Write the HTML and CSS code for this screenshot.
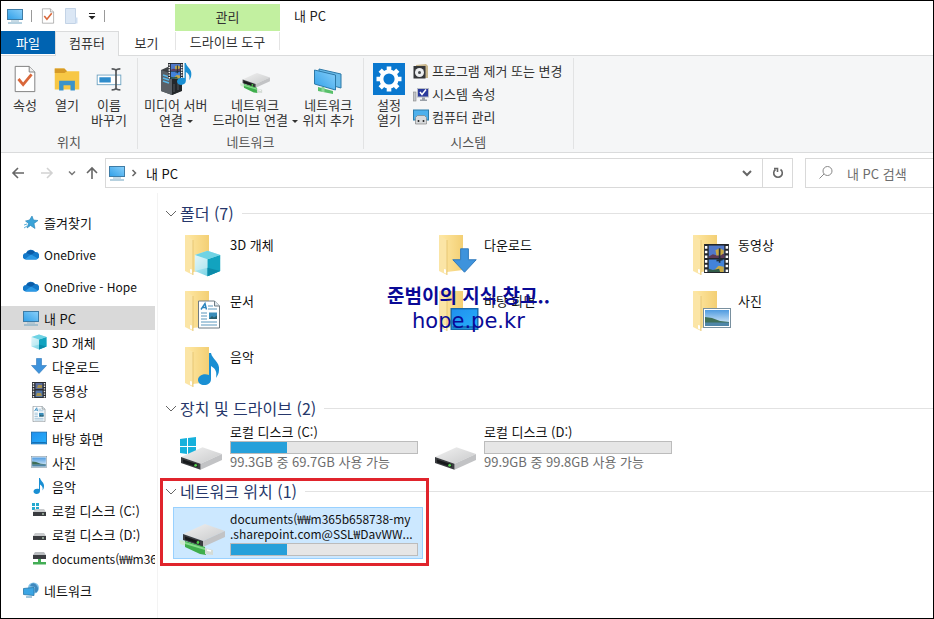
FILE: index.html
```html
<!DOCTYPE html>
<html lang="ko">
<head>
  <meta charset="UTF-8">
  <title>내 PC</title>
  <link rel="stylesheet" href="styles.css">
</head>
<body>

  <svg class="sprite" aria-hidden="true">
    <defs>
      <linearGradient id="g-screen" x1="0" y1="1" x2="1" y2="0">
        <stop offset="0" stop-color="#2f9fe8"/><stop offset="1" stop-color="#8ad0fa"/>
      </linearGradient>
      <linearGradient id="g-fold" x1="0" y1="0" x2="1" y2="0">
        <stop offset="0" stop-color="#ffe9a6"/><stop offset="1" stop-color="#f3cf74"/>
      </linearGradient>
      <linearGradient id="g-cube" x1="0" y1="0" x2="1" y2="1">
        <stop offset="0" stop-color="#d9f5fa"/><stop offset="1" stop-color="#5cc9de"/>
      </linearGradient>
      <linearGradient id="g-drive" x1="0" y1="0" x2="1" y2="1">
        <stop offset="0" stop-color="#f1f1f1"/><stop offset="1" stop-color="#c9cacb"/>
      </linearGradient>
      <linearGradient id="g-sky" x1="0" y1="0" x2="0" y2="1">
        <stop offset="0" stop-color="#4f9be0"/><stop offset="1" stop-color="#e8f4fb"/>
      </linearGradient>
      <linearGradient id="g-desk" x1="0" y1="0" x2="1" y2="1">
        <stop offset="0" stop-color="#1f8fee"/><stop offset="1" stop-color="#27b0fb"/>
      </linearGradient>
    </defs>

    <symbol id="monitor" viewBox="0 0 16 16">
      <rect x=".5" y="1.500" width="15" height="10" fill="url(#g-screen)" stroke="#3e7ca6"/>
      <path d="M4 13h8" stroke="#8fb6cc"/><path d="M1 15h14" stroke="#6fa3c0"/>
    </symbol>
    <symbol id="check" viewBox="0 0 24 30">
      <path d="M1.500 1.500h15l6 6v21h-21z" fill="#fff" stroke="#7b7b7b"/>
      <path d="M16.500 1.500v6h6" fill="#eee" stroke="#7b7b7b"/>
      <path d="M5 15l5 6 9-11" fill="none" stroke="#d9673a" stroke-width="3"/>
    </symbol>
    <symbol id="cube" viewBox="0 0 16 16">
      <path d="M8 .5l7.500 2.500v9.500L8 15.500.5 12.500V3z" fill="url(#g-cube)"/>
      <path d="M8 5.500L15.500 3v9.500L8 15.500z" fill="#12a3bf"/>
      <path d="M.5 3L8 .5 15.500 3 8 5.500z" fill="#6fd3e4"/>
      <path d="M8 15.500v-5l7.500 2z" fill="#0c8ba9"/>
      <path d="M8 5.500v5L.5 12.500V3z" fill="#fff" opacity=".35"/>
    </symbol>
    <symbol id="down" viewBox="0 0 16 16">
      <path d="M5.500.5h5v7h5L8 15.500.5 7.500h5z" fill="#3e93dc" stroke="#2d77bb" stroke-width=".6"/>
    </symbol>
    <symbol id="film" viewBox="0 0 24 28">
      <rect width="24" height="28" fill="#23262b"/>
      <path d="M2 2v25M22 2v25" stroke="#fff" stroke-width="2.400" stroke-dasharray="2.500 2"/>
      <rect x="4.500" y="1.500" width="15" height="12" fill="#5179c9"/>
      <rect x="4.500" y="15" width="15" height="12" fill="#4383d9"/>
      <path d="M4.500 12l4-2 4 1 3-3 4 2v3.500h-15z" fill="#5d3a56"/>
      <path d="M11 6l4-2 4 2v3l-3 2h-4z" fill="#c9a943"/>
      <path d="M15 4v14M12 16l6-1" stroke="#20303a" stroke-width="1.600"/>
      <path d="M10 25l4-4 5 1v5h-8z" fill="#c9ab47"/>
      <path d="M4.500 24l4 1 6-1 1 3h-11z" fill="#315c49"/>
    </symbol>
    <symbol id="film-s" viewBox="0 0 16 16">
      <rect x="1" width="14" height="16" fill="#2b2e33"/>
      <path d="M2.500 1v15M13.500 1v15" stroke="#e8e8e8" stroke-width="1.400" stroke-dasharray="1.400 1.200"/>
      <rect x="4.500" y="1" width="7" height="6" fill="#5b6d9c"/>
      <rect x="4.500" y="8.500" width="7" height="6.500" fill="#5577a8"/>
      <path d="M7 3h4v3H6zM6 11h4l1 3H5z" fill="#a6934f"/>
    </symbol>
    <symbol id="doc" viewBox="0 0 22 28">
      <path d="M.5.500h16l5 5v22H.5z" fill="#fff" stroke="#6f7b83"/>
      <path d="M16.500.500v5h5" fill="#dfe7ec" stroke="#6f7b83"/>
      <path d="M3 9L7 3l1.500 6M4.500 7H8" fill="none" stroke="#2a84bd" stroke-width="1.400"/>
      <path d="M10 5.500h5M10 8.500h9M3 12.500h6M3 15.500h6M3 18.500h6M3 21.500h16M3 24.500h16" stroke="#5b97bd"/>
      <rect x="11" y="12" width="8" height="6.500" fill="#3b8db9"/>
      <path d="M11 18.500l3-3 2 1.500 3-2v3.500z" fill="#2b5f6e"/>
    </symbol>
    <symbol id="desk" viewBox="0 0 28 22">
      <rect x=".7" y=".7" width="26.600" height="20.600" fill="url(#g-desk)" stroke="#1469ab" stroke-width="1.400"/>
      <path d="M2 19h24" stroke="#0f5e9f" stroke-width="1.400"/>
    </symbol>
    <symbol id="photo" viewBox="0 0 28 20">
      <rect x=".5" y=".5" width="27" height="19" fill="#fff" stroke="#79909f"/>
      <rect x="2" y="2" width="24" height="16" fill="url(#g-sky)"/>
      <path d="M2 9l7 1 8 3 9 1v1H2z" fill="#3f6f57"/>
      <path d="M2 14.500h24V18H2z" fill="#4f86a8"/>
    </symbol>
    <symbol id="note" viewBox="0 0 22 32">
      <path d="M11 0h2c1 6 9 9 8 17 0 4-2 6-3 8 1-6 0-9-5-12v13c0 4-3 6-7 6-3 0-6-2-6-5 0-4 5-7 11-5z" fill="#1a8fd3"/>
    </symbol>
    <symbol id="folder" viewBox="0 0 48 48">
      <path d="M12 4h19v34H12z" fill="#f7dc8f"/>
      <path d="M7 4h24v35l-16 2z" fill="url(#g-fold)"/>
      <path d="M7 4l8 5v35l-8-4z" fill="#fbe5a6"/>
      <path d="M15 9v35" stroke="#e3c069" stroke-width=".8"/>
      <path d="M12 38l2 .500v4l-2-1z" fill="#fff"/>
    </symbol>
    <symbol id="drive" viewBox="0 0 44 26">
      <path d="M1 12L23 2l20 7-22 10z" fill="url(#g-drive)"/>
      <path d="M21 19l22-10v6L21 25z" fill="#c2c3c5"/>
      <path d="M1 12l20 7v6L1 18z" fill="#3b3d40"/>
      <path d="M3 14.500l15 5v3L3 17.500z" fill="#17191b"/>
      <circle cx="16" cy="20.500" r="1.400" fill="#51d04c"/>
    </symbol>
    <symbol id="netdrive" viewBox="0 0 48 40">
      <use href="#drive" x="4" y="4" width="44" height="26"/>
      <path d="M1 22l6 1 1 5-6-2z" fill="#cfe9d2"/>
      <path d="M7 23l20 6 1 8-6-1L7 29z" fill="#3fae4c"/>
      <path d="M7 24l20 6v2L7 26z" fill="#86dc8b"/>
      <path d="M27 30l8 2v5l-8-1z" fill="#d5dcd6"/>
      <path d="M29 32l4 1" stroke="#fff" stroke-width="1.500"/>
    </symbol>
    <symbol id="windrive" viewBox="0 0 48 48">
      <path d="M2 13l7-1v8H2zM10 12l8-1v9h-8zM2 21h7v7l-7-1zM10 21h8v8l-8-1z" fill="#16b1dc"/>
      <use href="#drive" x="2" y="19" width="43" height="26"/>
    </symbol>
    <symbol id="plaindrive" viewBox="0 0 48 48">
      <use href="#drive" x="2" y="19" width="43" height="26"/>
    </symbol>
    <symbol id="drive-s" viewBox="0 0 16 16">
      <path d="M4 7h9l2 3H2z" fill="#c9cbcd"/><rect x="2" y="10" width="13" height="4" fill="#3a3c40"/>
      <rect x="11" y="11.500" width="2" height="1" fill="#d8f5d8"/>
    </symbol>
    <symbol id="windrive-s" viewBox="0 0 16 16">
      <path d="M1 1h3v3H1zM5 1h3v3H5zM1 5h3v3H1zM5 5h3v3H5z" fill="#25a9cf"/>
      <use href="#drive-s" width="16" height="16"/>
    </symbol>
    <symbol id="netdrive-s" viewBox="0 0 16 16">
      <path d="M4 2h9l2 3H2z" fill="#b9bcbf"/><rect x="2" y="5" width="13" height="4" fill="#3a3c40"/>
      <path d="M7 9h3v3h5v2.500H2V12h5z" fill="#43ad55"/>
    </symbol>
    <symbol id="star" viewBox="0 0 16 16">
      <path d="M9 2l1.500 4 4.500.500-4 3 1 5-4.500-3L4 14l1.500-4.500L2.500 7l4-1z" fill="#3aa3d8" stroke="#2782b5" stroke-width=".6"/>
      <path d="M1 11l3-1M1 14l3-2" stroke="#5fb2da"/>
    </symbol>
    <symbol id="cloud" viewBox="0 0 16 16">
      <path d="M3 13.500a3.200 3.200 0 010-6.400 5 5 0 019-1 3.700 3.700 0 011 7.400z" fill="#1479c9"/>
      <path d="M3.500 7a5 4.500 0 018.500-1l-4 3z" fill="#0b5ba6"/>
      <path d="M2 13l6-4.500 7 4a3 3 0 01-2 1H3z" fill="#2c9ae6"/>
    </symbol>
    <symbol id="network" viewBox="0 0 16 16">
      <circle cx="10.500" cy="6" r="5.500" fill="#7fc1e8"/>
      <path d="M7 4c2-4 5-3 7 0 2 3 1 5-1 7-2-2-1-4-1-6z" fill="#3f88bd"/>
      <path d="M.5 6.500l10.500-1v8l-10.500-1z" fill="#3ba5e4" stroke="#2877a8" stroke-width=".8"/>
      <path d="M3 15h6" stroke="#4c8fb8"/>
    </symbol>
    <symbol id="openfolder" viewBox="0 0 32 32">
      <path d="M2 4h11l3 3h14v21H2z" fill="#f7c745"/>
      <path d="M2 4h11l3 3-3 2H2z" fill="#d69a28"/>
      <path d="M7 29V18h18v11h-5v-6h-8v6z" fill="#3b93cb"/>
    </symbol>
    <symbol id="rename" viewBox="0 0 32 32">
      <rect x="2.500" y="11.500" width="27" height="11" fill="#fff" stroke="#6aa0bf"/>
      <rect x="5" y="14" width="13" height="6" fill="#2f8ccb"/>
      <path d="M19 4.500q5 0 5 2.500 0-2.500 5-2.500M24 6v21M19 28.500q5 0 5-2.500 0 2.500 5 2.500" fill="none" stroke="#56595c" stroke-width="2"/>
    </symbol>
    <symbol id="media" viewBox="0 0 32 32">
      <path d="M1 7l9-4 11 3v22l-9 4L1 28z" fill="#3d4145"/>
      <path d="M12 11l10-4v21l-10 4z" fill="#23272a"/>
      <path d="M1 7l11 4v21L1 28z" fill="#5a6066"/>
      <path d="M3 12l6 2M3 15l6 2M3 18l6 2" stroke="#59b7e8" stroke-width="1.500"/>
      <path d="M14 21v8M18 20v7" stroke="#52575c"/>
      <svg x="8" y="0" width="15" height="16" viewBox="0 0 24 28" preserveAspectRatio="none"><use href="#film" width="24" height="28"/></svg>
      <svg x="17" y="0" width="15" height="22" viewBox="0 0 22 32"><use href="#note" width="22" height="32"/></svg>
    </symbol>
    <symbol id="addnet" viewBox="0 0 32 32">
      <path d="M7 6l22 5v14L7 19z" fill="#69bbea" stroke="#2d79a8"/>
      <path d="M2.500 7l21 5v15l-21-6z" fill="url(#g-screen)" stroke="#2d79a8"/>
      <path d="M6 24l15 4v3L6 28z" fill="#58c06a"/>
      <path d="M11 24v5" stroke="#8fd69a" stroke-width="3"/>
    </symbol>
    <symbol id="gear" viewBox="0 0 32 32">
      <rect width="32" height="32" fill="#0a78cf"/>
      <circle cx="16" cy="16" r="7.600" fill="none" stroke="#fff" stroke-width="4"/>
      <g stroke="#fff" stroke-width="4.600">
        <path d="M16 3.500V8M16 24v4.500M3.500 16H8M24 16h4.500"/>
        <path d="M7.200 7.200l3.100 3.100M21.700 21.700l3.100 3.100M24.800 7.200l-3.100 3.100M10.300 21.700l-3.100 3.100"/>
      </g>
    </symbol>
    <symbol id="uninstall" viewBox="0 0 16 16">
      <path d="M3 2l10-1 2 2v12H4z" fill="#c9b78d"/>
      <rect x=".5" y="3" width="12" height="12.500" fill="#35373a"/>
      <circle cx="6.500" cy="9.500" r="4.500" fill="#eceef0"/><circle cx="6.500" cy="9.500" r="1.500" fill="#4a4d50"/>
    </symbol>
    <symbol id="sysprop" viewBox="0 0 16 16">
      <rect x=".5" y="6" width="2.500" height="9" fill="#c3c6ca" stroke="#888" stroke-width=".6"/>
      <rect x="4.500" y="2.500" width="11" height="8.500" fill="#2a3a9c" stroke="#b7bcc6"/>
      <path d="M7 6l2 2.500 4-5" fill="none" stroke="#fff" stroke-width="1.500"/>
      <path d="M9 11.500h3v2h2V15H7v-1.500h2z" fill="#9aa0a8"/>
    </symbol>
    <symbol id="manage" viewBox="0 0 16 16">
      <rect x=".5" y="1" width="15" height="10" fill="#4db0ec" stroke="#2c7cab"/>
      <path d="M2.500 8.500l2-2h7l2 2V15h-11z" fill="#d8dadc" stroke="#777" stroke-width=".6"/>
      <path d="M5.500 11v2M10.500 11v2" stroke="#333" stroke-width="1.600"/>
    </symbol>
    <symbol id="chev" viewBox="0 0 12 12">
      <path d="M1 4l5 5 5-5" fill="none" stroke="currentColor"/>
    </symbol>
  </svg>

  <div class="window">
    <header class="titlebar">
      <div class="quick">
        <svg class="ic16"><use href="#monitor"/></svg>
        <span class="sep"></span>
        <button class="quick-btn" aria-label="속성"><svg class="ic16"><use href="#check"/></svg></button>
        <button class="quick-btn" aria-label="새 폴더"><svg class="ic16" viewBox="0 0 16 16"><path d="M1.500.5h10v15h-10z" fill="#dbe7f5" stroke="#c3d3e6"/><path d="M11.500 9.500h2v6h-2z" fill="#cfdff2"/></svg></button>
        <button class="quick-btn" aria-label="빠른 실행 도구"><svg class="ic8" viewBox="0 0 8 8"><path d="M1 1.500h6" stroke="#222"/><path d="M.5 4h7L4 7.500z" fill="#222"/></svg></button>
        <span class="sep"></span>
      </div>
      <div class="context">관리</div>
      <h1 class="title">내 PC</h1>
      <nav class="tabs">
        <button class="tab file">파일</button>
        <button class="tab active">컴퓨터</button>
        <button class="tab">보기</button>
      </nav>
      <button class="context-tab">드라이브 도구</button>
    </header>

    <div class="ribbon">
      <section class="group place">
        <div class="tools">
          <button class="tool"><svg class="ic32"><use href="#check"/></svg>속성</button>
          <button class="tool"><svg class="ic32"><use href="#openfolder"/></svg>열기</button>
          <button class="tool"><svg class="ic32"><use href="#rename"/></svg>이름<br>바꾸기</button>
        </div>
        <div class="group-name">위치</div>
      </section>
      <section class="group">
        <div class="tools wide">
          <button class="tool"><svg class="ic32"><use href="#media"/></svg>미디어 서버<span>연결 <i class="caret"></i></span></button>
          <button class="tool"><svg class="ic32 pad"><use href="#netdrive"/></svg>네트워크<span>드라이브 연결 <i class="caret"></i></span></button>
          <button class="tool"><svg class="ic32"><use href="#addnet"/></svg>네트워크<br>위치 추가</button>
        </div>
        <div class="group-name">네트워크</div>
      </section>
      <section class="group">
        <div class="tools system">
          <button class="tool"><svg class="ic32"><use href="#gear"/></svg>설정<br>열기</button>
          <div class="tool-list">
            <button class="row-tool"><svg class="ic16"><use href="#uninstall"/></svg>프로그램 제거 또는 변경</button>
            <button class="row-tool"><svg class="ic16"><use href="#sysprop"/></svg>시스템 속성</button>
            <button class="row-tool"><svg class="ic16"><use href="#manage"/></svg>컴퓨터 관리</button>
          </div>
        </div>
        <div class="group-name">시스템</div>
      </section>
    </div>

    <div class="address-row">
      <div class="nav-buttons">
        <button class="nav-btn" aria-label="뒤로"><svg class="ic16" viewBox="0 0 16 16"><path d="M14 8H3M8 3L3 8l5 5" fill="none" stroke="#666" stroke-width="1.600"/></svg></button>
        <button class="nav-btn" aria-label="앞으로"><svg class="ic16" viewBox="0 0 16 16"><path d="M2 8h11M8 3l5 5-5 5" fill="none" stroke="#d2d2d2" stroke-width="1.600"/></svg></button>
        <button class="nav-btn recent" aria-label="최근 위치"><svg class="ic8" viewBox="0 0 8 8"><path d="M1 2.500l3 3 3-3" fill="none" stroke="#777" stroke-width="1.500"/></svg></button>
        <button class="nav-btn" aria-label="위로"><svg class="ic16" viewBox="0 0 16 16"><path d="M8 14V3M3 8l5-5 5 5" fill="none" stroke="#666" stroke-width="1.600"/></svg></button>
      </div>
      <div class="address">
        <svg class="ic16"><use href="#monitor"/></svg>
        <svg class="ic8 crumb" viewBox="0 0 8 8"><path d="M2.500 1l3 3-3 3" fill="none" stroke="#666" stroke-width="1.500"/></svg>
        <a href="#" class="path">내 PC</a>
        <button class="drop" aria-label="이전 위치"><svg class="ic12" viewBox="0 0 12 12"><path d="M2 4l4 4 4-4" fill="none" stroke="#666" stroke-width="2"/></svg></button>
        <button class="refresh" aria-label="새로 고침"><svg class="ic12" viewBox="0 0 12 12"><path d="M8.500 2.500a4.300 4.300 0 11-5 0M2 1.500h3.500V5" fill="none" stroke="#666" stroke-width="1.600"/></svg></button>
      </div>
      <label class="search">
        <svg class="ic16" viewBox="0 0 16 16"><circle cx="9.500" cy="6" r="4.500" fill="none" stroke="#888"/><path d="M6 9l-4.500 4.500" stroke="#888"/></svg>
        <input type="text" placeholder="내 PC 검색" aria-label="내 PC 검색">
      </label>
    </div>

    <div class="main">
      <nav class="sidebar">
        <a href="#" class="node"><svg class="ic16"><use href="#star"/></svg>즐겨찾기</a>
        <a href="#" class="node latin"><svg class="ic16"><use href="#cloud"/></svg>OneDrive</a>
        <a href="#" class="node latin"><svg class="ic16"><use href="#cloud"/></svg>OneDrive - Hope</a>
        <div class="branch">
          <a href="#" class="node selected"><svg class="ic16"><use href="#monitor"/></svg>내 PC</a>
          <a href="#" class="node child"><svg class="ic16"><use href="#cube"/></svg>3D 개체</a>
          <a href="#" class="node child"><svg class="ic16"><use href="#down"/></svg>다운로드</a>
          <a href="#" class="node child"><svg class="ic16"><use href="#film-s"/></svg>동영상</a>
          <a href="#" class="node child"><svg class="ic16"><use href="#doc"/></svg>문서</a>
          <a href="#" class="node child"><svg class="ic16"><use href="#desk"/></svg>바탕 화면</a>
          <a href="#" class="node child"><svg class="ic16"><use href="#photo"/></svg>사진</a>
          <a href="#" class="node child"><svg class="ic16"><use href="#note"/></svg>음악</a>
          <a href="#" class="node child"><svg class="ic16"><use href="#windrive-s"/></svg>로컬 디스크 (C:)</a>
          <a href="#" class="node child"><svg class="ic16"><use href="#drive-s"/></svg>로컬 디스크 (D:)</a>
          <a href="#" class="node child latin"><svg class="ic16"><use href="#netdrive-s"/></svg>documents(₩₩m365b658738-my</a>
        </div>
        <a href="#" class="node"><svg class="ic16"><use href="#network"/></svg>네트워크</a>
      </nav>

      <main class="content">
        <section class="section">
          <h2 class="section-title"><svg class="ic12"><use href="#chev"/></svg>폴더 (7)</h2>
          <div class="tiles folders">
            <div class="tile"><svg class="ic48" viewBox="0 0 48 48"><use href="#folder"/><use href="#cube" x="16" y="19" width="27" height="27"/></svg><div class="info">3D 개체</div></div>
            <div class="tile"><svg class="ic48" viewBox="0 0 48 48"><use href="#folder"/><use href="#down" x="20" y="17" width="25" height="25"/></svg><div class="info">다운로드</div></div>
            <div class="tile"><svg class="ic48" viewBox="0 0 48 48"><use href="#folder"/><use href="#film" x="18" y="13" width="25" height="29"/></svg><div class="info">동영상</div></div>
            <div class="tile"><svg class="ic48" viewBox="0 0 48 48"><use href="#folder"/><use href="#doc" x="20" y="13" width="22" height="29"/></svg><div class="info">문서</div></div>
            <div class="tile"><svg class="ic48" viewBox="0 0 48 48"><use href="#folder"/><use href="#desk" x="18" y="21" width="29" height="22"/></svg><div class="info">바탕 화면</div></div>
            <div class="tile"><svg class="ic48" viewBox="0 0 48 48"><use href="#folder"/><use href="#photo" x="17" y="20" width="28" height="22"/></svg><div class="info">사진</div></div>
            <div class="tile"><svg class="ic48" viewBox="0 0 48 48"><use href="#folder"/><use href="#note" x="20" y="10" width="22" height="32"/></svg><div class="info">음악</div></div>
          </div>
        </section>

        <section class="section">
          <h2 class="section-title"><svg class="ic12"><use href="#chev"/></svg>장치 및 드라이브 (2)</h2>
          <div class="tiles drives">
            <div class="tile">
              <svg class="ic48"><use href="#windrive"/></svg>
              <div class="info">로컬 디스크 (C:)
                <progress class="usage" value="30" max="100" aria-label="사용 공간"></progress>
                <span class="free">99.3GB 중 69.7GB 사용 가능</span>
              </div>
            </div>
            <div class="tile">
              <svg class="ic48"><use href="#plaindrive"/></svg>
              <div class="info">로컬 디스크 (D:)
                <progress class="usage" value="0" max="100" aria-label="사용 공간"></progress>
                <span class="free">99.9GB 중 99.8GB 사용 가능</span>
              </div>
            </div>
          </div>
        </section>

        <section class="section marked">
          <h2 class="section-title"><svg class="ic12"><use href="#chev"/></svg>네트워크 위치 (1)</h2>
          <div class="tiles">
            <div class="tile picked">
              <svg class="ic48" viewBox="0 0 48 48"><use href="#netdrive" y="9" width="48" height="40"/></svg>
              <div class="info latin">documents(₩₩m365b658738-my<br>.sharepoint.com@SSL₩DavWW...
                <progress class="usage" value="30" max="100" aria-label="사용 공간"></progress>
              </div>
            </div>
          </div>
        </section>

        <div class="watermark">
          <div class="mark-name">준범이의 지식 창고..</div>
          <div class="mark-url">hope.pe.kr</div>
        </div>
      </main>
    </div>
  </div>

</body>
</html>
```

FILE: styles.css
```css
* {
  box-sizing: border-box;
}

body {
  margin: 0;
  background: #fff;
  color: #111;
  font-family: "Noto Sans CJK KR", sans-serif;
  font-size: 13px;
  line-height: 15px;
}

button {
  padding: 0;
  border: none;
  background: none;
  color: inherit;
  font: inherit;
}

a {
  color: inherit;
  text-decoration: none;
}

h1, h2 {
  margin: 0;
  font-weight: 400;
}

svg {
  flex: none;
}

.sprite {
  position: absolute;
  width: 0;
  height: 0;
}

.ic8 { width: 8px; height: 8px; }
.ic12 { width: 12px; height: 12px; }
.ic16 { width: 16px; height: 16px; }
.ic32 { width: 32px; height: 32px; }
.ic48 { width: 48px; height: 48px; }

.latin {
  font-size: 12px;
}

.window {
  display: flex;
  flex-direction: column;
  min-height: 100vh;
  border: 1px solid #000;
}

/* title bar and tabs */
.titlebar {
  display: grid;
  grid-template-columns: 174px 105px 1fr;
  grid-template-rows: 30px 25px;
  background: linear-gradient(#dadbdc, #dadbdc) bottom / 100% 1px no-repeat;
}

.quick {
  display: flex;
  align-items: center;
  gap: 8px;
  padding-left: 6px;
}

.quick-btn {
  display: flex;
}

.sep {
  width: 1px;
  height: 12px;
  background: #999;
}

.context {
  display: flex;
  align-items: center;
  justify-content: center;
  margin-top: 3px;
  padding-bottom: 2px;
  background: #c2f0a0;
  color: #333;
}

.title {
  align-self: center;
  padding: 0 0 2px 14px;
  font-size: 13px;
  color: #222;
}

.tabs {
  display: flex;
}

.tab {
  width: 55px;
  padding-bottom: 3px;
  color: #333;
}

.tab.file {
  width: 54px;
  height: 23px;
  padding-bottom: 1px;
  background: #0063b1;
  color: #fff;
}

.tab.active {
  width: 64px;
  border: 1px solid #dadbdc;
  border-bottom: none;
  background: #f5f6f7;
}

.context-tab {
  height: 18px;
  margin-top: 1px;
  border: 1px solid #e4e4e4;
  border-width: 0 1px;
  color: #333;
}

/* ribbon */
.ribbon {
  display: flex;
  padding: 2px 0 3px;
  background: #f5f6f7;
  border-bottom: 1px solid #dadbdc;
  color: #333;
}

.group {
  display: flex;
  flex-direction: column;
  border-right: 1px solid #e2e3e4;
}

.tools {
  display: flex;
  height: 76px;
  padding: 0 7px 0 3px;
}

.tools.wide {
  gap: 5px;
  padding: 0 9px 0 6px;
}

.tools.system {
  gap: 8px;
  padding: 0 10px 0 9px;
}

.tool {
  display: flex;
  flex-direction: column;
  align-items: center;
  min-width: 32px;
  padding-top: 5px;
  text-align: center;
}

.place .tool {
  width: 42px;
}

.tool svg {
  margin-bottom: 2px;
}

.place svg {
  padding: 2px;
}

.tool svg.pad {
  padding-top: 6px;
}

.caret {
  display: inline-block;
  border: 3px solid transparent;
  border-top-color: #333;
  border-bottom: none;
  vertical-align: middle;
}

.tool-list {
  display: flex;
  flex-direction: column;
}

.row-tool {
  display: flex;
  align-items: center;
  gap: 3px;
  height: 23px;
  padding-top: 2px;
}

.group-name {
  text-align: center;
  color: #555;
}

/* address bar */
.address-row {
  display: flex;
  align-items: center;
  height: 40px;
}

.nav-buttons {
  display: flex;
  align-items: center;
  gap: 13px;
  padding: 0 5px 0 9px;
}

.nav-btn {
  display: flex;
}

.nav-btn.recent {
  margin-right: -5px;
}

.address {
  display: flex;
  flex: 1;
  align-items: center;
  height: 30px;
  padding-left: 3px;
  border: 1px solid #d9d9d9;
}

.crumb {
  margin: 0 8px 0 5px;
}

.path {
  flex: 1;
}

.drop, .refresh {
  display: flex;
  align-items: center;
  justify-content: center;
  width: 30px;
  height: 28px;
}

.refresh {
  border-left: 1px solid #d9d9d9;
}

.search {
  display: flex;
  align-items: center;
  width: 128px;
  height: 30px;
  margin-left: 12px;
  padding-left: 12px;
  border: 1px solid #d9d9d9;
  border-right: none;
}

.search input {
  flex: 1;
  min-width: 0;
  padding: 0 0 0 13px;
  border: none;
  outline: none;
  font: inherit;
}

.search input::placeholder {
  color: #6d6d6d;
}

/* folder tree */
.main {
  display: flex;
  flex: 1;
}

.sidebar {
  display: flex;
  flex-direction: column;
  gap: 8px;
  width: 157px;
  padding: 17px 2px 0 0;
  border-right: 1px solid #f3f3f3;
}

.node {
  display: flex;
  align-items: center;
  gap: 5px;
  height: 24px;
  padding-left: 22px;
  overflow: hidden;
  white-space: nowrap;
}

.node.child {
  padding-left: 30px;
}

.node.selected {
  background: #d9d9d9;
}

/* content */
.content {
  position: relative;
  flex: 1;
  min-width: 0;
  padding-top: 8px;
}

.section {
  position: relative;
  margin-bottom: 3px;
}

.section-title {
  display: flex;
  align-items: center;
  gap: 3px;
  padding-left: 7px;
  font-size: 16px;
  line-height: 24px;
  color: #26376b;
}

.section-title svg {
  color: #666;
}

.section-title::after {
  content: "";
  flex: 1;
  height: 1px;
  margin-left: 5px;
  background: #e2e2e2;
}

.tiles {
  display: grid;
  grid-template-columns: repeat(auto-fill, 250px);
  gap: 4px;
  padding: 4px 0 0 15px;
}

.tile {
  display: flex;
  align-items: center;
  gap: 4px;
  height: 52px;
  padding: 0 5px;
}

.folders .tile {
  align-items: flex-start;
  padding-top: 2px;
}

.folders .info {
  padding-top: 6px;
}

.drives .info {
  align-self: flex-start;
}

.tile.picked {
  padding: 0 4px;
  border: 1px solid #99d1ff;
  background: #cce8ff;
}

.info {
  flex: 1;
  min-width: 0;
  white-space: nowrap;
}

.usage {
  display: block;
  width: 100%;
  height: 13px;
  margin: 2px 0 0;
  appearance: none;
  border: 1px solid #bcbcbc;
  background: #e6e6e6;
}

.usage::-webkit-progress-bar {
  background: #e6e6e6;
}

.usage::-webkit-progress-value {
  background: #26a0da;
}

.free {
  color: #6d6d6d;
}

/* red frame drawn over the network section */
.marked::after {
  content: "";
  position: absolute;
  top: -1px;
  left: 2px;
  width: 263px;
  height: 82px;
  border: 3px solid #e0242c;
}

.watermark {
  position: absolute;
  top: 88px;
  left: 229px;
  color: #0a0a96;
  text-align: center;
  white-space: nowrap;
}

.mark-name {
  font-size: 19px;
  font-weight: 700;
  line-height: 28px;
}

.mark-url {
  font-family: "DejaVu Sans", sans-serif;
  font-size: 21px;
  line-height: 24px;
}
```
